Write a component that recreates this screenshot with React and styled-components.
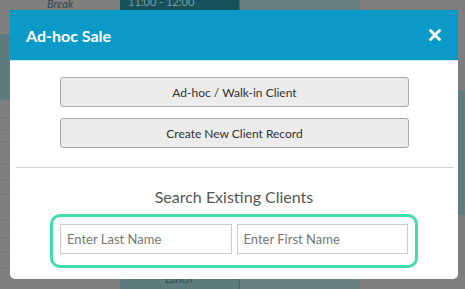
import React from 'react';
import styled, { createGlobalStyle } from 'styled-components';

const GlobalStyle = createGlobalStyle`
  html, body {
    margin: 0;
    padding: 0;
    width: 465px;
    height: 289px;
    overflow: hidden;
    font-family: Lato, 'Noto Sans', sans-serif;
  }
`;

function App() {
  return (
    <>
      <GlobalStyle />
      <Page>
        <Calendar>
          <Column $bg='#7f7f7f'>
            <Cell $h={34}>
              <CellText $x={47} $top={-3}>Break</CellText>
            </Cell>
            <Cell $h={66} $bg='#5e7b80' />
            {[18, 12, 12, 23, 15, 15, 25, 18, 15, 15].map((h, i) => (
              <Cell key={i} $h={h} $dotted />
            ))}
          </Column>
          <Column $bg='#5f7b80' $line>
            <Cell $h={60} $bg='#17525a'>
              <TimeText>11:00 - 12:00</TimeText>
            </Cell>
            <Cell $h={210} />
            <Cell $h={19}>
              <CellText $x={45} $top={2}>Lunch</CellText>
            </Cell>
          </Column>
          <Column $bg='#677f83' />
          <Column $bg='#7f7f7f'>
            <Cell $h={90} />
            <Cell $h={125} $bg='#607c80' />
          </Column>
        </Calendar>

        <Modal>
          <Header>
            <Title>Ad-hoc Sale</Title>
            <Close aria-label='close'>
              <svg width='12' height='12' viewBox='0 0 12 12'>
                <path
                  d='M1.5 1.5 L10.5 10.5 M10.5 1.5 L1.5 10.5'
                  stroke='#fff'
                  strokeWidth='2.8'
                  strokeLinecap='round'
                />
              </svg>
            </Close>
          </Header>
          <Body>
            <ActionButton>Ad-hoc / Walk-in Client</ActionButton>
            <ActionButton>Create New Client Record</ActionButton>
          </Body>
          <Divider />
          <SearchTitle>Search Existing Clients</SearchTitle>
          <SearchBox>
            <SearchInput placeholder='Enter Last Name' />
            <SearchInput placeholder='Enter First Name' />
          </SearchBox>
        </Modal>
      </Page>
    </>
  );
}

const Page = styled.div`
  position: relative;
  width: 465px;
  height: 289px;
  overflow: hidden;
  background: #7f7f7f;
`;

const Calendar = styled.div`
  display: grid;
  grid-template-columns: 120px 120px 120px 105px;
  height: 289px;
`;

const Column = styled.div`
  display: flex;
  flex-direction: column;
  background: ${(p) => p.$bg};
  border-right: ${(p) => (p.$line ? '1px solid #4e6569' : 'none')};
`;

const Cell = styled.div`
  position: relative;
  flex: 0 0 ${(p) => p.$h}px;
  background: ${(p) => p.$bg || 'transparent'};
  border-bottom: ${(p) => (p.$dotted ? '1px dotted #6e6e6e' : 'none')};
  box-sizing: border-box;
`;

const CellText = styled.span`
  position: absolute;
  left: ${(p) => p.$x}px;
  top: ${(p) => p.$top}px;
  font-size: 11px;
  font-style: italic;
  color: #2f4a50;
`;

const TimeText = styled.span`
  display: block;
  padding: 0 0 0 8px;
  margin-top: -5px;
  font-size: 11px;
  color: #7d9da2;
`;

const Modal = styled.div`
  position: absolute;
  left: 10px;
  top: 10px;
  width: 448px;
  height: 269px;
  background: #fff;
  border-radius: 0 0 5px 5px;
  display: flex;
  flex-direction: column;
  box-sizing: border-box;
  overflow: hidden;
`;

const Header = styled.div`
  flex: 0 0 51px;
  display: flex;
  align-items: center;
  justify-content: space-between;
  padding: 0 17px 0 16px;
  background: #0b99c8;
  border-bottom: 1px solid #cfe6ee;
  box-sizing: border-box;
`;

const Title = styled.h2`
  margin: 0;
  font-size: 16px;
  font-weight: 700;
  color: #fff;
`;

const Close = styled.button`
  display: flex;
  padding: 0;
  border: none;
  background: transparent;
`;

const Body = styled.div`
  display: flex;
  flex-direction: column;
  gap: 11px;
  padding: 16px 49px 0 50px;
`;

const ActionButton = styled.button`
  height: 30px;
  border: 1px solid #a9a9a9;
  border-radius: 3px;
  background: #ececec;
  font-family: Lato, 'Noto Sans', sans-serif;
  font-size: 12px;
  color: #333;
`;

const Divider = styled.hr`
  margin: 19px 4px 0 6px;
  border: none;
  border-top: 1px solid #d5d5d5;
`;

const SearchTitle = styled.h3`
  margin: 19px 0 0;
  text-align: center;
  font-size: 16px;
  font-weight: 400;
  color: #555;
`;

const SearchBox = styled.div`
  display: flex;
  gap: 5px;
  margin: 8px 0 0 40px;
  width: 368px;
  padding: 7px 7px 11px;
  border: 3px solid #40dcab;
  border-radius: 10px;
  box-sizing: border-box;
`;

const SearchInput = styled.input`
  flex: 1;
  min-width: 0;
  height: 30px;
  padding: 0 6px;
  border: 1px solid #ccc;
  box-sizing: border-box;
  font-family: Lato, 'Noto Sans', sans-serif;
  font-size: 13px;
  color: #555;
  &::placeholder {
    color: #777;
  }
`;

export default App;
